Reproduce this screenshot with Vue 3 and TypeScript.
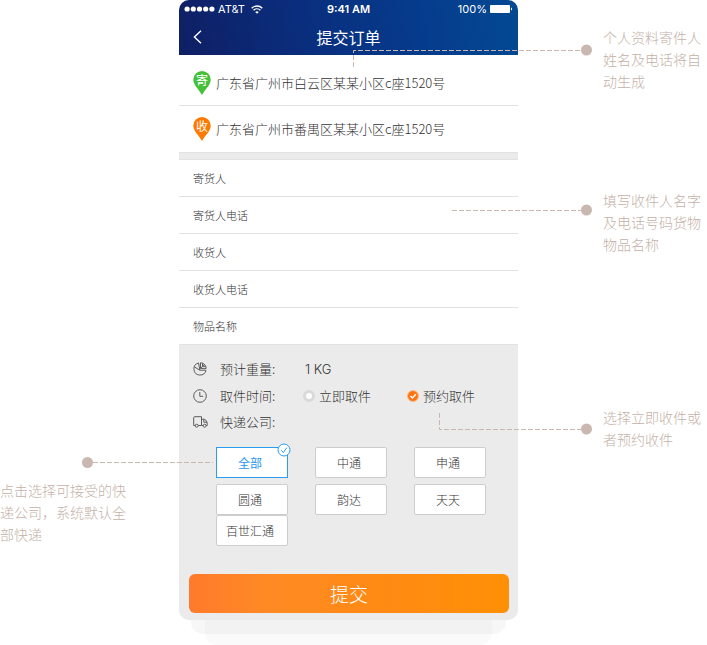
<script setup lang="ts">
import { ref } from 'vue'

interface Field {
  id: string
  label: string
}

interface Note {
  id: string
  text: string
  path: string
  dotY: number
}

const fields: Field[] = [
  { id: 'sender', label: '寄货人' },
  { id: 'sender-phone', label: '寄货人电话' },
  { id: 'receiver', label: '收货人' },
  { id: 'receiver-phone', label: '收货人电话' },
  { id: 'goods', label: '物品名称' },
]

const addresses = [
  { mark: '寄', kind: 'from', text: '广东省广州市白云区某某小区c座1520号' },
  { mark: '收', kind: 'to', text: '广东省广州市番禺区某某小区c座1520号' },
]

const couriers = ['全部', '中通', '申通', '圆通', '韵达', '天天']
const moreCouriers = ['百世汇通']

const notes: Note[] = [
  { id: 'auto', text: '个人资料寄件人姓名及电话将自动生成', path: 'M1.5 41V24.5H229', dotY: 24 },
  { id: 'fill', text: '填写收件人名字及电话号码货物物品名称', path: 'M100 21.5H229', dotY: 21 },
  { id: 'time', text: '选择立即收件或者预约收件', path: 'M87.5 7V23.5H229', dotY: 23 },
]

const values = ref<Record<string, string>>({})
const pickup = ref<'now' | 'later'>('later')
const courier = ref('全部')
</script>

<template>
  <main class="stage">
    <aside class="side left">
      <div class="note">
        <svg class="lead-left" width="131" height="12" viewBox="0 0 131 12" aria-hidden="true">
          <path class="dash" d="M11 6.5H131" />
          <circle class="dot" cx="5.5" cy="6.5" r="5.5" />
        </svg>
        <p>点击选择可接受的快递公司，系统默认全部快递</p>
      </div>
    </aside>

    <div class="device">
      <form class="phone" @submit.prevent>
        <header class="top">
          <div class="status">
            <div class="carrier">
              <svg width="31" height="6" viewBox="0 0 31 6" aria-hidden="true">
                <circle v-for="n in 5" :key="n" :cx="n * 6.2 - 3.1" cy="3" r="2.6" fill="#fff" />
              </svg>
              <span>AT&amp;T</span>
              <svg width="12" height="9" viewBox="0 0 12 9" fill="none" stroke="#fff" stroke-width="1.4" aria-hidden="true">
                <path d="M.7 3.2a7.6 7.6 0 0 1 10.6 0M2.6 5.2a4.9 4.9 0 0 1 6.8 0" />
                <path d="M6 8.8 4.2 7a2.6 2.6 0 0 1 3.6 0z" fill="#fff" stroke="none" />
              </svg>
            </div>
            <strong class="clock">9:41 AM</strong>
            <div class="power">
              <span>100%</span>
              <svg width="23" height="8" viewBox="0 0 23 8" fill="#fff" aria-hidden="true">
                <rect width="20" height="8" rx="1" />
                <path d="M21 2.5c1.4.3 1.4 2.7 0 3z" />
              </svg>
            </div>
          </div>
          <div class="bar">
            <button type="button" class="back" aria-label="返回">
              <svg width="9" height="14" viewBox="0 0 9 14" fill="none" stroke="#fff" stroke-width="1.4" aria-hidden="true">
                <path d="M8 .7 1.4 7 8 13.3" />
              </svg>
            </button>
            <h1>提交订单</h1>
          </div>
        </header>

        <ul class="addresses">
          <li v-for="a in addresses" :key="a.kind">
            <span class="pin" :class="a.kind">
              <svg width="18" height="24" viewBox="0 0 18 24" aria-hidden="true">
                <path d="M9 0a8.7 8.7 0 0 1 8.7 8.8C17.7 14 12 18.5 9 24 6 18.5.3 14 .3 8.8A8.7 8.7 0 0 1 9 0z" />
              </svg>
              <b>{{ a.mark }}</b>
            </span>
            <span>{{ a.text }}</span>
          </li>
        </ul>

        <div class="fields">
          <div v-for="f in fields" :key="f.id" class="field">
            <label :for="f.id">{{ f.label }}</label>
            <input :id="f.id" v-model="values[f.id]" type="text" />
          </div>
        </div>

        <section class="options">
          <div class="option">
            <svg class="glyph" width="14" height="14" viewBox="0 0 14 14" aria-hidden="true">
              <path d="M5.6 1A6.1 6.1 0 1 0 13 8.2H6.8L1.300 4.800M6.800 8.200 5.600 1" />
              <path d="M7.500.8V6.400H13.200A5.700 5.700 0 0 0 7.500.8zM7.500 6.400l4-4M9.600 1.300v3M9.600 4.300h3" />
            </svg>
            <span class="name">预计重量:</span>
            <span class="weight">1 KG</span>
          </div>
          <div class="option" role="radiogroup" aria-label="取件时间">
            <svg class="glyph" width="14" height="14" viewBox="0 0 14 14" aria-hidden="true">
              <circle cx="7" cy="7" r="6.3" />
              <path d="M6.800 3v4.300h3.400" />
            </svg>
            <span class="name">取件时间:</span>
            <label class="choice">
              <span class="radio">
                <input v-model="pickup" type="radio" name="pickup" value="now" />
              </span>
              立即取件
            </label>
            <label class="choice">
              <span class="radio">
                <input v-model="pickup" type="radio" name="pickup" value="later" />
                <svg viewBox="0 0 12 12" aria-hidden="true"><path d="m3.500 6 2 2 3.300-3.700" /></svg>
              </span>
              预约取件
            </label>
          </div>
          <div class="option last">
            <svg class="glyph" width="15" height="12" viewBox="0 0 15 12" aria-hidden="true">
              <path d="M2.300 9.500H.7V1.700Q.7.700 1.700.700H8.500V9.500H5.200M8.500 3.200H11.200Q13.800 4 14.200 7V9.500H13M10.200 9.500H8.500M10.800 3.500V6.200H14" />
              <circle cx="3.700" cy="9.700" r="1.500" />
              <circle cx="11.600" cy="9.700" r="1.500" />
            </svg>
            <span class="name">快递公司:</span>
          </div>

          <div class="chips">
            <button
              v-for="c in couriers"
              :key="c"
              type="button"
              class="chip"
              :class="{ on: courier === c }"
              :aria-pressed="courier === c"
              @click="courier = c"
            >
              {{ c }}
              <svg v-if="courier === c" class="tick" width="14" height="14" viewBox="0 0 14 14" aria-hidden="true">
                <circle cx="7" cy="7" r="6" />
                <path d="m4.300 7.200 2 2.400 3.500-5" />
              </svg>
            </button>
          </div>
          <div class="chips more">
            <button
              v-for="c in moreCouriers"
              :key="c"
              type="button"
              class="chip"
              :class="{ on: courier === c }"
              :aria-pressed="courier === c"
              @click="courier = c"
            >
              {{ c }}
            </button>
          </div>

          <button type="submit" class="submit">提交</button>
        </section>
      </form>
      <div class="layer near"></div>
      <div class="layer far"></div>
    </div>

    <aside class="side right">
      <div v-for="n in notes" :key="n.id" class="note" :class="n.id">
        <svg class="lead" width="251" height="44" viewBox="0 0 251 44" aria-hidden="true">
          <path class="dash" :d="n.path" />
          <circle class="dot" cx="234.5" :cy="n.dotY" r="5.5" />
        </svg>
        <p>{{ n.text }}</p>
      </div>
    </aside>
  </main>
</template>

<style>
body {
  margin: 0;
  background: #fff;
}
</style>

<style scoped>
* {
  box-sizing: border-box;
}

.stage {
  display: grid;
  grid-template-columns: 179fr 339fr 189fr;
  align-items: start;
  font-family: 'Noto Sans CJK SC', sans-serif;
  font-size: 13px;
  font-weight: 300;
  line-height: 20px;
  color: #333;
}

h1,
p,
ul {
  margin: 0;
  padding: 0;
}

button,
input {
  font: inherit;
  color: inherit;
}

button {
  padding: 0;
  cursor: pointer;
}

/* Side notes */
.side {
  font-size: 14px;
  line-height: 22px;
  color: #c4b1a8;
}

.left {
  padding-top: 456px;
}

.left .note {
  width: 127px;
}

.lead-left {
  display: block;
  position: relative;
  z-index: 2;
  margin: 0 0 11px 82px;
}

.right {
  padding: 26px 0 0 85px;
}

.right .note {
  position: relative;
}

.note.fill {
  margin-top: 97px;
}

.note.time {
  margin-top: 151px;
}

.lead {
  position: absolute;
  top: 0;
  left: -251px;
  z-index: 2;
  pointer-events: none;
}

.dash {
  fill: none;
  stroke: #c9b8b0;
  stroke-width: 1;
  stroke-dasharray: 5 2;
}

.dot {
  fill: #c9b8b0;
}

/* Phone */
.phone {
  position: relative;
  z-index: 1;
  overflow: hidden;
  border-radius: 10px;
  background: #ebebeb;
}

.top {
  height: 55px;
  color: #fff;
  background: linear-gradient(80deg, #0f1f64 0%, #0a2d7c 35%, #063b8c 70%, #034992 100%);
}

.status {
  display: grid;
  grid-template-columns: 1fr auto 1fr;
  align-items: center;
  height: 18px;
  padding: 0 5px;
  font-family: Inter, sans-serif;
  font-size: 11px;
  font-weight: 400;
  line-height: 18px;
}

.carrier,
.power {
  display: flex;
  align-items: center;
  gap: 3px;
}

.carrier svg:last-child {
  margin-left: 3px;
}

.power {
  justify-content: flex-end;
}

.clock {
  font-weight: 600;
}

.bar {
  display: grid;
  grid-template-columns: 36px 1fr 36px;
  align-items: center;
  height: 37px;
}

.back {
  display: grid;
  place-items: center;
  height: 37px;
  border: 0;
  background: none;
}

h1 {
  font-size: 16px;
  font-weight: 400;
  line-height: 24px;
  text-align: center;
}

.addresses {
  list-style: none;
}

.addresses li {
  display: flex;
  align-items: center;
  gap: 5px;
  height: 51px;
  padding: 5px 0 0 14px;
  border-bottom: 1px solid #e2e2e2;
  background: #fff;
}

.addresses li:last-child {
  height: 47px;
  padding-top: 0;
}

.pin {
  position: relative;
  width: 18px;
  height: 24px;
}

.pin svg {
  display: block;
}

.pin.from {
  fill: #45c03a;
}

.pin.to {
  fill: #ff7800;
}

.pin b {
  position: absolute;
  inset: 0 0 auto;
  font-size: 12px;
  font-weight: 400;
  line-height: 18px;
  text-align: center;
  color: #fff;
}

.fields {
  margin-top: 6px;
  border-top: 1px solid #e2e2e2;
  background: #fff;
}

.field {
  display: flex;
  align-items: center;
  height: 37px;
  padding: 0 14px;
  border-bottom: 1px solid #e2e2e2;
  font-size: 11px;
}

.field label {
  flex: none;
  width: 72px;
}

.field input {
  flex: 1;
  min-width: 0;
  height: 24px;
  border: 0;
  outline: 0;
  background: transparent;
}

.options {
  padding: 10px 9px 7px 10px;
}

.option {
  display: grid;
  grid-template-columns: 27px 83px 104px 1fr;
  align-items: center;
  height: 27px;
  padding-left: 4px;
}

.option.last {
  height: 25px;
}

.glyph {
  fill: none;
  stroke: #5c5c5c;
  stroke-width: 1;
}

.weight {
  padding-left: 2px;
  font-family: Inter, sans-serif;
}

.choice {
  display: flex;
  align-items: center;
  gap: 4px;
}

.radio {
  position: relative;
  width: 12px;
  height: 12px;
}

.radio input {
  appearance: none;
  display: block;
  width: 12px;
  height: 12px;
  margin: 0;
  border: 3px solid #d9d9d9;
  border-radius: 50%;
  background: #fff;
}

.radio input:checked {
  border: 1px solid #fbbd8c;
  background: #ff7412;
}

.radio svg {
  display: none;
  position: absolute;
  inset: 0;
  fill: none;
  stroke: #fff;
  stroke-width: 1.5;
  pointer-events: none;
}

.radio input:checked + svg {
  display: block;
}

.chips {
  display: grid;
  grid-template-columns: repeat(3, 72px);
  justify-content: space-between;
  row-gap: 6px;
  margin: 13px 23px 0 27px;
}

.chips.more {
  margin-top: 0;
}

.chip {
  position: relative;
  height: 31px;
  padding-right: 4px;
  border: 1px solid #cdcdcd;
  border-radius: 2px;
  background: #fff;
  font-size: 12px;
  line-height: 18px;
}

.chip.on {
  border-color: #2b9cf2;
  border-radius: 0;
  color: #1f95f0;
  font-weight: 400;
}

.tick {
  position: absolute;
  top: -5px;
  right: -4px;
  fill: #fff;
  stroke: #2b9cf2;
  stroke-width: 1;
}

.tick path {
  fill: none;
}

.submit {
  display: block;
  width: 100%;
  height: 39px;
  margin-top: 28px;
  border: 0;
  border-radius: 6px;
  background: linear-gradient(90deg, #ff7a2c 0%, #ff8a24 25%, #ff8a14 60%, #ff9005 100%);
  font-size: 19px;
  line-height: 27px;
  color: #fff;
}

.layer {
  border-radius: 0 0 12px 12px;
}

.near {
  height: 14px;
  margin: 0 12px;
  background: rgba(0, 0, 0, 0.03);
}

.far {
  height: 25px;
  margin: -14px 26px 0;
  background: rgba(0, 0, 0, 0.02);
}
</style>
